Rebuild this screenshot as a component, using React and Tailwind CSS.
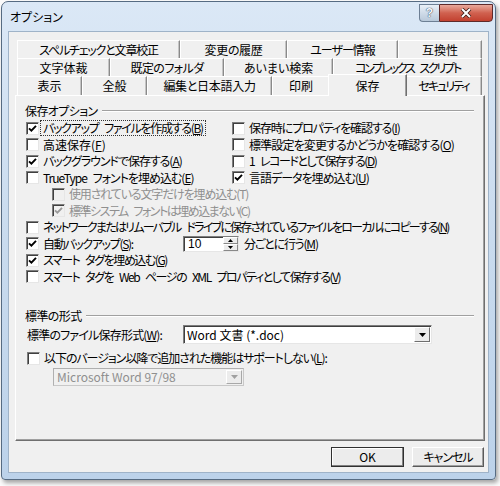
import React from "react";

// a visible word gap, as in the original UI font
const S = () => <span className="tracking-[3px]"> </span>;

const rows = [
  [
    ["スペルチェックと文章校正", 163, "tracking-[-1.2px]"],
    ["変更の履歴", 107, "tracking-[-0.3px]"],
    ["ユーザー情報", 111, "tracking-[-1px]"],
    ["互換性", 84, ""],
  ],
  [
    ["文字体裁", 93, ""],
    ["既定のフォルダ", 114, "tracking-[-0.6px]"],
    ["あいまい検索", 109, ""],
    [<>コンプレックス<S />スクリプト</>, 149, "tracking-[-2.2px]"],
  ],
];

const lastRow = [
  ["表示", 65, ""],
  ["全般", 65, ""],
  ["編集と日本語入力", 125, "tracking-[-0.3px]"],
  ["印刷", 58, ""],
  ["保存", 73, "", true],
  ["セキュリティ", 77, "tracking-[-2px]"],
];

function Box({ checked, disabled }) {
  return (
    <span
      className={`inline-flex items-center justify-center w-[13px] h-[13px] shrink-0 border border-t-[#7d7d7d] border-l-[#7d7d7d] border-r-[#e6e6e6] border-b-[#e6e6e6] shadow-[inset_1px_1px_0_#3f3f3f] ${
        disabled ? "bg-[#f0f0f0]" : "bg-white"
      }`}
    >
      {checked && (
        <svg width="9" height="9" viewBox="0 0 9 9">
          <path
            d="M1 4.3 L3.4 6.7 L8 1.8"
            fill="none"
            stroke={disabled ? "#9a9a9a" : "#000"}
            strokeWidth="1.9"
          />
        </svg>
      )}
    </span>
  );
}

function Check({ checked, disabled, focus, t = "tracking-[-1px]", children }) {
  return (
    <div className="flex items-center h-[16.5px]">
      <Box checked={checked} disabled={disabled} />
      <span
        className={`ml-[2px] px-[2px] leading-[14px] whitespace-nowrap ${t} ${
          disabled ? "text-[#8f8f8f]" : "text-black"
        } ${focus ? "outline outline-1 outline-dotted outline-[#333]" : ""}`}
      >
        {children}
      </span>
    </div>
  );
}

function Group({ title }) {
  return (
    <div className="flex items-center h-[16px] pl-[9px] pr-[10px]">
      <span className="leading-[14px] whitespace-nowrap tracking-[-0.6px]">{title}</span>
      <div className="ml-[4px] flex-1 border-t border-[#a0a0a0] border-b border-b-white" />
    </div>
  );
}

function Arrow({ color = "#000" }) {
  return (
    <svg width="7" height="4" viewBox="0 0 7 4">
      <path d="M0 0 H7 L3.5 4 Z" fill={color} />
    </svg>
  );
}

const tabCls =
  "h-full flex items-center justify-center border-t border-l border-white border-r border-r-[#8a8a8a] shadow-[inset_-1px_0_0_#c4c4c4] whitespace-nowrap leading-[14px]";

export default function App() {
  return (
    <div className="w-[500px] h-[486px] bg-[#fbfbfb] overflow-hidden text-[12px] text-black font-['Noto_Sans_CJK_JP','Noto_Sans',sans-serif] [font-feature-settings:'palt']">
      {/* WINDOW */}
      <div className="ml-[1px] mt-[1px] w-[495px] h-[479px] rounded-t-[7px] rounded-b-[4px] border border-[#566b82] bg-gradient-to-b from-[#dbe8f6] via-[#c9dbee] to-[#bcd2ea] px-[6px] pb-[6px] flex flex-col shadow-[2px_3px_4px_rgba(0,0,0,0.35)]">
        {/* TITLE BAR */}
        <div className="h-[29px] flex items-start justify-between">
          <span className="ml-[2px] mt-[7px] text-[12px] leading-[16px]">オプション</span>
          <div className="mt-[2px] -mr-[4px] flex">
            <div className="w-[20px] h-[18px] rounded-bl-[4px] border border-[#6d7f94] border-r-0 bg-gradient-to-b from-[#e9f0f7] via-[#cfdbe8] to-[#b9c9da] flex items-center justify-center text-[12px] font-['Liberation_Sans',sans-serif] font-bold text-[#f4f7fb] [text-shadow:0_0_1px_#34445a,0_0_1px_#34445a]">
              ?
            </div>
            <div className="w-[54px] h-[18px] rounded-br-[4px] border border-[#5e2a2a] bg-gradient-to-b from-[#e9a99c] via-[#d0614f] to-[#c2402f] flex items-center justify-center">
              <svg width="12" height="10" viewBox="0 0 12 10">
                <path d="M2 1 L10 9 M10 1 L2 9" stroke="#3b1a15" strokeWidth="3.6" />
                <path d="M2 1 L10 9 M10 1 L2 9" stroke="#fff" strokeWidth="2" />
              </svg>
            </div>
          </div>
        </div>

        {/* CLIENT */}
        <div className="flex-1 bg-[#f0f0f0] border border-[#9fb3c8] flex flex-col">
          {/* TAB CONTROL */}
          <div className="mt-[8px] ml-[6px] w-[470px]">
            {rows.map((row, i) => (
              <div key={i} className="flex ml-[2px] h-[18px]">
                {row.map(([label, w, t], j) => (
                  <div key={j} style={{ width: w }} className={tabCls}>
                    <span className={t}>{label}</span>
                  </div>
                ))}
              </div>
            ))}
            <div className="flex ml-[2px] h-[19px] items-end">
              {lastRow.map(([label, w, t, sel]) => (
                <div
                  key={label}
                  style={{ width: w }}
                  className={
                    sel
                      ? "relative z-10 h-[21px] -mb-[1px] -mx-[2px] px-[2px] box-content flex items-center justify-center bg-[#f0f0f0] border-t border-l border-white border-r border-r-[#6f6f6f] shadow-[inset_-1px_0_0_#a0a0a0] whitespace-nowrap leading-[14px]"
                      : tabCls
                  }
                >
                  <span className={t}>{label}</span>
                </div>
              ))}
            </div>

            {/* PANEL */}
            <div className="h-[346px] border-t border-l border-white border-r border-b border-r-[#6f6f6f] border-b-[#6f6f6f] shadow-[inset_-1px_-1px_0_#a0a0a0] pt-[7px] flex flex-col">
              <Group title="保存オプション" />

              <div className="mt-[1px] pl-[10px]">
                <div className="grid grid-cols-[206px_1fr]">
                  <Check checked focus t="tracking-[-1.3px]">
                    バックアップ<S />ファイルを作成する(<u>B</u>)
                  </Check>
                  <Check t="tracking-[-1.1px]">
                    保存時にプロパティを確認する(<u>I</u>)
                  </Check>
                  <Check t="tracking-[0px]">
                    高速保存(<u>F</u>)
                  </Check>
                  <Check t="tracking-[-0.85px]">
                    標準設定を変更するかどうかを確認する(<u>O</u>)
                  </Check>
                  <Check checked t="tracking-[-1.05px]">
                    バックグラウンドで保存する(<u>A</u>)
                  </Check>
                  <Check t="tracking-[-1.45px]">
                    1<S />レコードとして保存する(<u>D</u>)
                  </Check>
                  <Check t="tracking-[-1px]">
                    TrueType<S />フォントを埋め込む(<u>E</u>)
                  </Check>
                  <Check checked t="tracking-[-1px]">
                    言語データを埋め込む(<u>U</u>)
                  </Check>
                </div>
                <div className="pl-[26px]">
                  <Check disabled t="tracking-[-1.15px]">
                    使用されている文字だけを埋め込む(T)
                  </Check>
                  <Check disabled checked t="tracking-[-1.5px]">
                    標準システム<S />フォントは埋め込まない(C)
                  </Check>
                </div>
                <Check t="tracking-[-1.75px]">
                  ネットワークまたはリムーバブル<S />ドライブに保存されているファイルをローカルにコピーする(<u>N</u>)
                </Check>
                <div className="flex items-center h-[16.5px]">
                  <Box checked />
                  <span className="ml-[2px] px-[2px] w-[142px] whitespace-nowrap leading-[14px] tracking-[-1.35px]">
                    自動バックアップ(<u>S</u>):
                  </span>
                  <div className="w-[56px] h-[16px] flex bg-white border border-t-[#7d7d7d] border-l-[#7d7d7d] border-r-[#e6e6e6] border-b-[#e6e6e6] shadow-[inset_1px_1px_0_#3f3f3f]">
                    <span className="flex-1 pl-[4px] leading-[14px] font-['Liberation_Sans',sans-serif]">10</span>
                    <div className="w-[15px] flex flex-col">
                      <div className="flex-1 flex items-center justify-center bg-[#ececec] border border-white border-r-[#888] border-b-[#888]">
                        <svg width="5" height="3" viewBox="0 0 5 3">
                          <path d="M0 3 H5 L2.5 0 Z" fill="#000" />
                        </svg>
                      </div>
                      <div className="flex-1 flex items-center justify-center bg-[#ececec] border border-white border-r-[#888] border-b-[#888]">
                        <svg width="5" height="3" viewBox="0 0 5 3">
                          <path d="M0 0 H5 L2.5 3 Z" fill="#000" />
                        </svg>
                      </div>
                    </div>
                  </div>
                  <span className="ml-[5px] whitespace-nowrap leading-[14px] tracking-[-1.2px]">
                    分ごとに行う(<u>M</u>)
                  </span>
                </div>
                <Check checked t="tracking-[-1.45px]">
                  スマート<S />タグを埋め込む(<u>G</u>)
                </Check>
                <Check t="tracking-[-1.45px]">
                  スマート<S />タグを<S />Web<S />ページの<S />XML<S />プロパティとして保存する(<u>V</u>)
                </Check>
              </div>

              <div className="mt-[23px]">
                <Group title="標準の形式" />
              </div>

              <div className="mt-[1px] pl-[11px] flex items-center h-[19px]">
                <span className="w-[156px] whitespace-nowrap leading-[14px] tracking-[-0.8px]">
                  標準のファイル保存形式(<u>W</u>):
                </span>
                <div className="w-[249px] h-[19px] flex items-center bg-white border border-t-[#7d7d7d] border-l-[#7d7d7d] border-r-[#e6e6e6] border-b-[#e6e6e6] shadow-[inset_1px_1px_0_#3f3f3f]">
                  <span className="flex-1 pl-[3px] leading-[14px] whitespace-nowrap">Word 文書 (*.doc)</span>
                  <div className="w-[16px] h-[15px] mr-[1px] flex items-center justify-center bg-[#ececec] border border-white border-r-[#6f6f6f] border-b-[#6f6f6f]">
                    <Arrow />
                  </div>
                </div>
              </div>

              <div className="mt-[6px] pl-[11px]">
                <Check t="tracking-[-1.05px]">
                  以下のバージョン以降で追加された機能はサポートしない(<u>L</u>):
                </Check>
              </div>

              <div className="mt-[1px] ml-[37px] w-[191px] h-[18px] flex items-center bg-[#f0f0f0] border border-[#c8c8c8] border-t-[#b0b0b0] border-l-[#b0b0b0]">
                <span className="flex-1 pl-[3px] leading-[14px] whitespace-nowrap text-[#8f8f8f]">
                  Microsoft Word 97/98
                </span>
                <div className="w-[16px] h-[14px] mr-[1px] flex items-center justify-center bg-[#ececec] border border-white border-r-[#a8a8a8] border-b-[#a8a8a8]">
                  <Arrow color="#a0a0a0" />
                </div>
              </div>
            </div>
          </div>

          {/* BUTTONS */}
          <div className="mt-[6px] pr-[4px] flex justify-end gap-[8px]">
            <button className="w-[73px] h-[20px] flex items-center justify-center bg-[#ececec] border border-[#303030] shadow-[inset_-1px_-1px_0_#808080,inset_1px_1px_0_#fff] leading-[14px]">
              OK
            </button>
            <button className="w-[72px] h-[20px] flex items-center justify-center bg-[#ececec] border border-white border-r-[#5a5a5a] border-b-[#5a5a5a] shadow-[inset_-1px_-1px_0_#a0a0a0] leading-[14px] tracking-[-1px]">
              キャンセル
            </button>
          </div>
        </div>
      </div>
    </div>
  );
}
